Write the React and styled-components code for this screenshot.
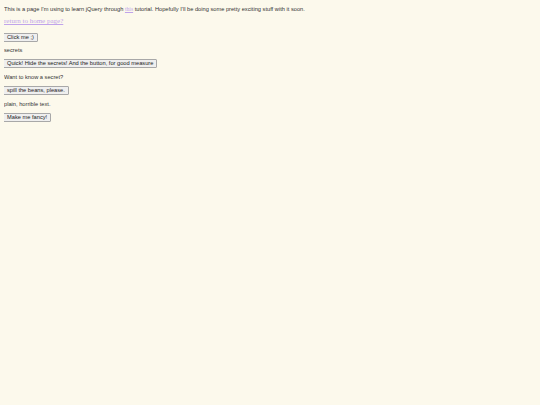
import React from "react";
import styled, { createGlobalStyle } from "styled-components";

const Global = createGlobalStyle`
  html, body { background: #fcf9ec; }
  body { margin: 4px; font-family: "Liberation Serif", serif; font-size: 7px; color: #222; }
`;

const Text = styled.p`
  font-family: "Liberation Sans", Arial, sans-serif;
  font-size: 5.7px;
  color: #333;
  margin: ${(p) => p.$top}px 0 0;
  line-height: 6.5px;
`;

const Link = styled.a`
  color: #c0a4ea;
  font-family: "Liberation Serif", serif;
  font-size: ${(p) => p.$size || "inherit"};
`;

const LinkLine = styled.div`
  margin-top: ${(p) => p.$top}px;
  line-height: 8px;
`;

const ButtonRow = styled.div`
  margin-top: ${(p) => p.$top}px;
  display: flex;
`;

const Button = styled.button`
  box-sizing: border-box;
  height: 9px;
  font-family: "Liberation Sans", Arial, sans-serif;
  font-size: 5.7px;
  color: #222;
  background: #efefef;
  border: 1px solid #a8a8a8;
  border-radius: 1px;
  padding: 0 3px;
  margin: 0 0 0 -1px;
  line-height: 7px;
`;

export default function App() {
  return (
    <>
      <Global />
      <Text $top={2}>
        This is a page I'm using to learn jQuery through <Link $size="5.7px" href="#">this</Link> tutorial. Hopefully I'll be doing some pretty exciting stuff with it soon.
      </Text>
      <LinkLine $top={4.75}>
        <Link href="#">return to home page?</Link>
      </LinkLine>
      <ButtonRow $top={8}>
        <Button>Click me ;)</Button>
      </ButtonRow>
      <Text $top={4.75}>secrets</Text>
      <ButtonRow $top={5.75}>
        <Button>Quick! Hide the secrets! And the button, for good measure</Button>
      </ButtonRow>
      <Text $top={5.75}>Want to know a secret?</Text>
      <ButtonRow $top={5.75}>
        <Button>spill the beans, please.</Button>
      </ButtonRow>
      <Text $top={5.75}>plain, horrible text.</Text>
      <ButtonRow $top={5.75}>
        <Button>Make me fancy!</Button>
      </ButtonRow>
    </>
  );
}
